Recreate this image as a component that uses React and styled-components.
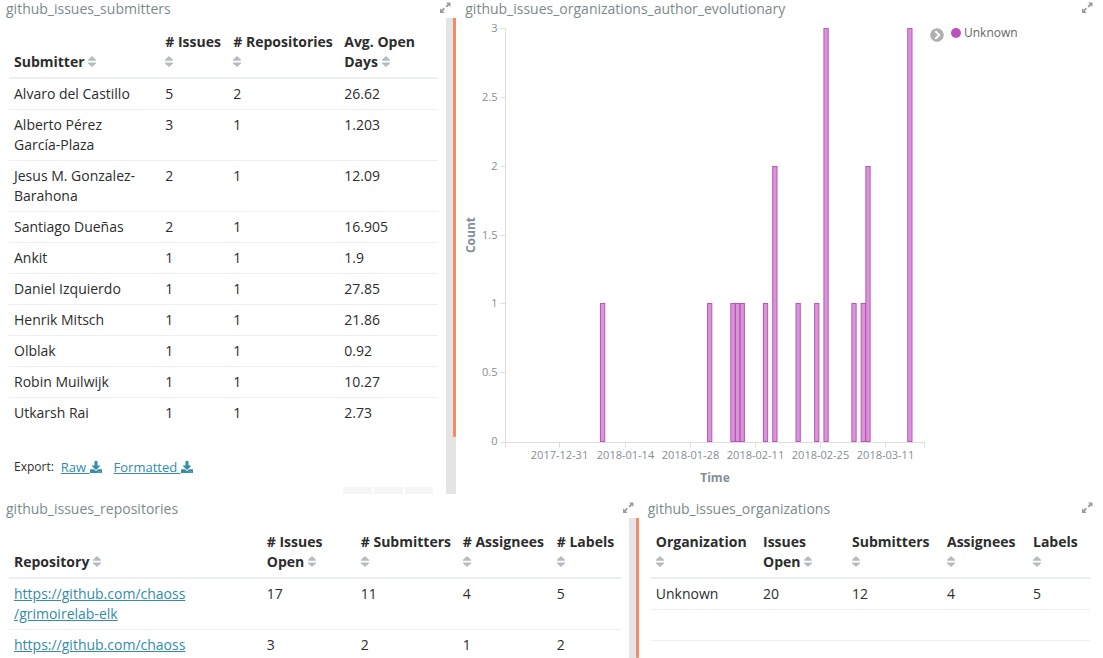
import React, { useEffect, useRef, useState } from "react";
import styled, { createGlobalStyle } from "styled-components";
import { FaDownload, FaChevronCircleRight } from "react-icons/fa";

const GlobalStyle = createGlobalStyle`
  *, *::before, *::after { box-sizing: border-box; }
  body {
    margin: 0;
    background: #fff;
    color: #2d2d2d;
    font: 14px/20px "Open Sans", "Noto Sans", sans-serif;
  }
  button { font: inherit; color: inherit; background: none; border: 0; padding: 0; cursor: pointer; }
`;

const Dashboard = styled.main`
  display: grid;
  grid-template-rows: 494px minmax(0, 1fr);
  row-gap: 6px;
  height: 100vh;
  padding-right: 5px;
  overflow: hidden;
`;

const DashboardRow = styled.div`
  display: grid;
  grid-template-columns: ${(p) => p.$columns};
  column-gap: 3px;
  min-height: 0;
`;

const PanelBox = styled.section`
  display: flex;
  flex-direction: column;
  min-width: 0;
  min-height: 0;
  overflow: hidden;
`;

const PanelHeader = styled.header`
  display: flex;
  flex: none;
  justify-content: space-between;
  align-items: flex-start;
  height: 18px;
  padding: 0 5px 0 6px;
`;

const PanelTitle = styled.h2`
  margin: 0;
  font-size: 14px;
  font-weight: 400;
  line-height: 18px;
  color: #7b8a8b;
  white-space: nowrap;
`;

const ExpandButton = styled.button`
  display: flex;
  padding-top: 2px;
  color: #9c9c9c;
`;

const PanelBody = styled.div`
  display: flex;
  flex: 1;
  min-height: 0;
`;

const TablePane = styled.div`
  flex: 1;
  min-width: 0;
  padding: 9px 8px 0 9px;
  overflow: hidden;
`;

const ScrollTrack = styled.div`
  display: flex;
  flex: none;
  justify-content: flex-end;
  width: 10px;
  background: #e4e4e4;
`;

const ScrollThumb = styled.div`
  width: 3px;
  height: ${(p) => p.$length};
  border-radius: 0 0 1px 1px;
  background: #f08d66;
`;

const Table = styled.table`
  width: 100%;
  table-layout: fixed;
  border-collapse: separate;
  border-spacing: 0;
`;

const Col = styled.col`
  width: ${(p) => p.$width || "auto"};
`;

const HeadCell = styled.th`
  padding: 5px;
  border-bottom: 2px solid #ecf0f1;
  text-align: left;
  vertical-align: bottom;
  font-weight: 700;
`;

const SortButton = styled.button`
  display: block;
  width: 100%;
  text-align: left;
`;

const Cell = styled.td`
  height: 31px;
  padding: 5px;
  border-bottom: 1px solid #ecf0f1;
  vertical-align: top;
  tr:last-child > & { border-bottom-color: transparent; }
`;

const NoBreak = styled.span`
  white-space: nowrap;
`;

const Link = styled.a`
  color: #328caa;
  text-decoration: underline;
`;

const ExportBar = styled.div`
  display: flex;
  align-items: center;
  gap: 7px;
  margin-top: 28px;
  padding-left: 5px;
  font-size: 12px;
`;

const ExportLinks = styled.div`
  display: flex;
  gap: 12px;
  font-size: 13px;
  svg { vertical-align: -1px; }
`;

const Pager = styled.nav`
  display: flex;
  justify-content: flex-end;
  gap: 2px;
  margin-top: 10px;
  padding-right: 5px;
`;

const PageButton = styled.button`
  width: 29px;
  height: 30px;
  background: #f5f5f5;
  &:last-child { width: 28px; border-radius: 0 3px 3px 0; }
`;

const ChartArea = styled.div`
  flex: 1;
  min-width: 0;
  min-height: 0;
  svg { display: block; overflow: visible; }
`;

const AxisLabel = styled.text`
  font-size: 11px;
  fill: #848e96;
`;

const AxisTitle = styled.text`
  font-size: 12px;
  font-weight: 700;
  fill: #848e96;
`;

const Legend = styled.aside`
  display: flex;
  flex: none;
  align-items: flex-start;
  gap: 7px;
  width: 173px;
  padding: 5px 0 0 5px;
`;

const LegendToggle = styled.button`
  display: flex;
  padding-top: 5px;
  color: #b0b0b0;
`;

const LegendItem = styled.span`
  display: flex;
  align-items: center;
  gap: 3px;
  font-size: 12px;
  color: #666;
`;

const LegendDot = styled.span`
  width: 10px;
  height: 10px;
  border-radius: 50%;
  background: #bc52bc;
`;

const SortIcon = () => (
  <svg width="8" height="11" viewBox="0 0 8 11" fill="#b4bcc2" aria-hidden="true">
    <path d="M4 0L8 3.8V4.8H0V3.8Z M0 6.4H8V7.4L4 11L0 7.4Z" />
  </svg>
);

const ExpandIcon = () => (
  <svg width="11" height="11" viewBox="0 0 11 11" fill="currentColor" aria-hidden="true">
    <path d="M6 0.5H10.5V5L9 3.5L6.8 5.6L5.5 4.3L7.6 2Z M0 6.5L1.6 7.8L3.8 5.7L5 6.9L2.9 9.1L4.5 10.9H0Z" />
  </svg>
);

function Panel({ title, scroll, children }) {
  return (
    <PanelBox>
      <PanelHeader>
        <PanelTitle>{title}</PanelTitle>
        <ExpandButton type="button" aria-label={`Expand ${title}`}>
          <ExpandIcon />
        </ExpandButton>
      </PanelHeader>
      <PanelBody>
        {children}
        {scroll && (
          <ScrollTrack>
            <ScrollThumb $length={scroll} />
          </ScrollTrack>
        )}
      </PanelBody>
    </PanelBox>
  );
}

function DataTable({ columns, rows, emptyRows = 0 }) {
  return (
    <Table>
      <colgroup>
        {columns.map((c) => (
          <Col key={c.label} $width={c.width} />
        ))}
      </colgroup>
      <thead>
        <tr>
          {columns.map((c) => (
            <HeadCell key={c.label} scope="col">
              <SortButton type="button">
                {c.label} <SortIcon />
              </SortButton>
            </HeadCell>
          ))}
        </tr>
      </thead>
      <tbody>
        {rows.map((row, i) => (
          <tr key={i}>
            {row.map((value, j) => (
              <Cell key={j}>{value}</Cell>
            ))}
          </tr>
        ))}
        {Array.from({ length: emptyRows }, (_, i) => (
          <tr key={`empty-${i}`}>
            <Cell colSpan={columns.length} />
          </tr>
        ))}
      </tbody>
    </Table>
  );
}

const submitterColumns = [
  { label: "Submitter" },
  { label: "# Issues", width: "68px" },
  { label: "# Repositories", width: "111px" },
  { label: "Avg. Open Days", width: "99px" },
];

const submitterRows = [
  ["Alvaro del Castillo", "5", "2", "26.62"],
  [<>Alberto Pérez <NoBreak>García-Plaza</NoBreak></>, "3", "1", "1.203"],
  ["Jesus M. Gonzalez-Barahona", "2", "1", "12.09"],
  ["Santiago Dueñas", "2", "1", "16.905"],
  ["Ankit", "1", "1", "1.9"],
  ["Daniel Izquierdo", "1", "1", "27.85"],
  ["Henrik Mitsch", "1", "1", "21.86"],
  ["Olblak", "1", "1", "0.92"],
  ["Robin Muilwijk", "1", "1", "10.27"],
  ["Utkarsh Rai", "1", "1", "2.73"],
];

const repositoryColumns = [
  { label: "Repository" },
  { label: "# Issues Open", width: "94px" },
  { label: "# Submitters", width: "102px" },
  { label: "# Assignees", width: "94px" },
  { label: "# Labels", width: "69px" },
];

const repositoryRows = [
  [
    <Link href="https://github.com/chaoss/grimoirelab-elk">
      https://github.com/chaoss
      <br />
      /grimoirelab-elk
    </Link>,
    "17", "11", "4", "5",
  ],
  [<Link href="https://github.com/chaoss">https://github.com/chaoss</Link>, "3", "2", "1", "2"],
];

const organizationColumns = [
  { label: "Organization" },
  { label: "Issues Open", width: "89px" },
  { label: "Submitters", width: "95px" },
  { label: "Assignees", width: "86px" },
  { label: "Labels", width: "62px" },
];

// Days are counted from the left edge of a 90-day time axis.
const DAYS = 90;
const FIRST_TICK = 11.7;
const dateTicks = ["2017-12-31", "2018-01-14", "2018-01-28", "2018-02-11", "2018-02-25", "2018-03-11"];
const countTicks = [0, 0.5, 1, 1.5, 2, 2.5, 3];
const FIRST_BAR = 20.4;
const bars = [
  [0, 1], [23, 1], [28, 1], [29, 1], [30, 1], [35, 1], [37, 2], [42, 1],
  [46, 1], [48, 3], [54, 1], [56, 1], [57, 2], [66, 3],
];

function Chart() {
  const area = useRef(null);
  const [size, setSize] = useState({ width: 0, height: 0 });

  useEffect(() => {
    const measure = () =>
      setSize({
        width: Math.round(area.current.clientWidth),
        height: Math.round(area.current.clientHeight),
      });
    measure();
    const observer = new ResizeObserver(measure);
    observer.observe(area.current);
    return () => observer.disconnect();
  }, []);

  const left = 46.5;
  const top = 10.5;
  const right = Math.max(size.width - 0.5, left);
  const bottom = Math.max(size.height - 51.5, top);
  const zero = bottom - 1;
  const day = (right - left) / DAYS;
  const y = (v) => Math.floor(zero - ((zero - top) * v) / 3) + 0.5;
  const tickX = (i) => Math.floor(left + (FIRST_TICK + i * 14) * day) + 0.5;

  return (
    <ChartArea ref={area}>
      {size.width > 0 && (
        <svg width={size.width} height={size.height} role="img" aria-label="Count over time">
          {bars.map(([offset, count]) => (
            <rect
              key={offset}
              x={left + (FIRST_BAR + offset) * day}
              y={y(count)}
              width={day - 0.4}
              height={zero - y(count)}
              fill="#bc52bc"
              fillOpacity="0.6"
              stroke="#bc52bc"
            />
          ))}
          <g stroke="#ddd" fill="none">
            <path d={`M${left - 5} ${top}H${left}V${bottom + 5}`} />
            <path d={`M${left - 5} ${bottom}H${right}V${bottom + 5}`} />
            {countTicks.slice(1, -1).map((v) => (
              <path key={v} d={`M${left - 5} ${y(v)}H${left}`} />
            ))}
            {dateTicks.map((d, i) => (
              <path key={d} d={`M${tickX(i)} ${bottom}v5`} />
            ))}
          </g>
          {countTicks.map((v) => (
            <AxisLabel key={v} x={left - 8} y={y(v) + 3} textAnchor="end">
              {v}
            </AxisLabel>
          ))}
          {dateTicks.map((d, i) => (
            <AxisLabel key={d} x={tickX(i)} y={bottom + 16} textAnchor="middle">
              {d}
            </AxisLabel>
          ))}
          <AxisTitle x={(left + right) / 2} y={bottom + 39} textAnchor="middle">
            Time
          </AxisTitle>
          <AxisTitle transform={`translate(16 ${(top + zero) / 2}) rotate(-90)`} textAnchor="middle">
            Count
          </AxisTitle>
        </svg>
      )}
    </ChartArea>
  );
}

export default function App() {
  return (
    <>
      <GlobalStyle />
      <Dashboard>
        <DashboardRow $columns="minmax(0, 5fr) minmax(0, 7fr)">
          <Panel title="github_issues_submitters" scroll="88%">
            <TablePane>
              <DataTable columns={submitterColumns} rows={submitterRows} />
              <ExportBar>
                <span>Export:</span>
                <ExportLinks>
                  <Link href="#raw">
                    Raw <FaDownload size={12} />
                  </Link>
                  <Link href="#formatted">
                    Formatted <FaDownload size={12} />
                  </Link>
                </ExportLinks>
              </ExportBar>
              <Pager aria-label="Pages">
                <PageButton type="button" aria-label="Page 1" />
                <PageButton type="button" aria-label="Page 2" />
                <PageButton type="button" aria-label="Next page" />
              </Pager>
            </TablePane>
          </Panel>
          <Panel title="github_issues_organizations_author_evolutionary">
            <Chart />
            <Legend>
              <LegendToggle type="button" aria-label="Toggle legend">
                <FaChevronCircleRight size={14} />
              </LegendToggle>
              <LegendItem>
                <LegendDot />
                Unknown
              </LegendItem>
            </Legend>
          </Panel>
        </DashboardRow>
        <DashboardRow $columns="minmax(0, 7fr) minmax(0, 5fr)">
          <Panel title="github_issues_repositories" scroll="100%">
            <TablePane>
              <DataTable columns={repositoryColumns} rows={repositoryRows} />
            </TablePane>
          </Panel>
          <Panel title="github_issues_organizations">
            <TablePane>
              <DataTable
                columns={organizationColumns}
                rows={[["Unknown", "20", "12", "4", "5"]]}
                emptyRows={2}
              />
            </TablePane>
          </Panel>
        </DashboardRow>
      </Dashboard>
    </>
  );
}
